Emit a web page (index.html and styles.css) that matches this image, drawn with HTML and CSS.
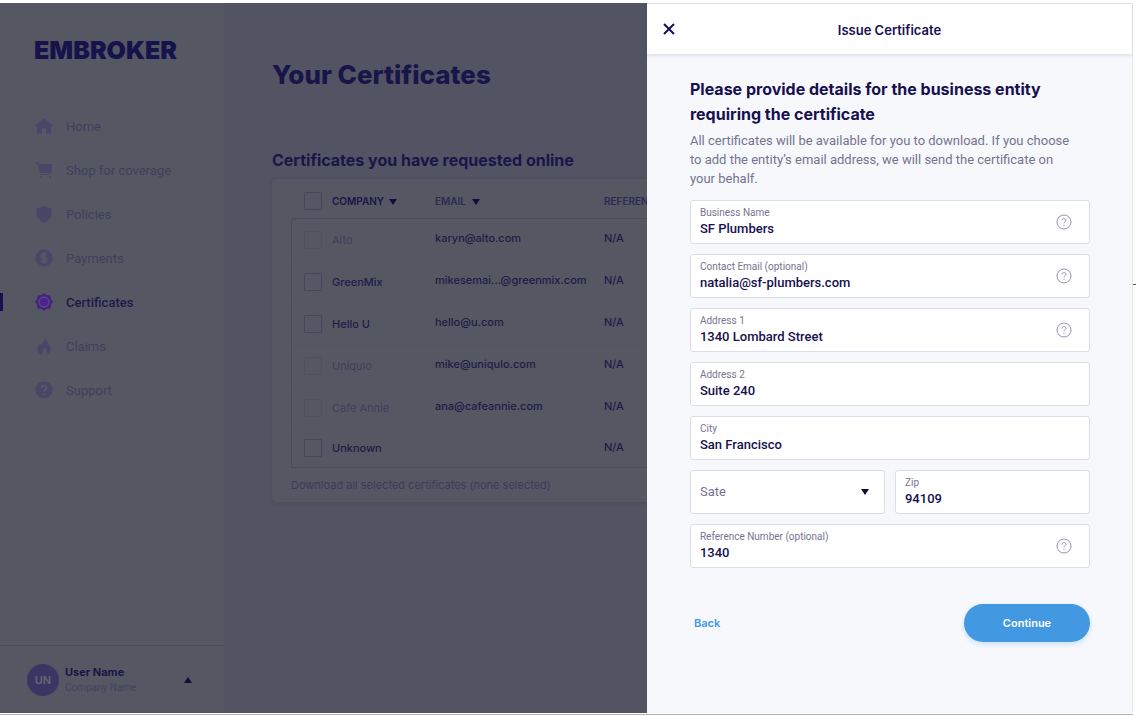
FILE: index.html
```html
<!DOCTYPE html>
<html lang="en">
<head>
  <meta charset="UTF-8">
  <title>Your Certificates</title>
  <meta name="viewport" content="width=device-width,initial-scale=1">
  <link rel="stylesheet" href="styles.css">
</head>
<body>
  <div class="app">
    <!-- Sidebar -->
    <aside class="sidebar">
      <a class="logo" href="#">EMBROKER</a>
      <nav class="nav">
        <a class="nav-item" href="#">
          <svg class="nav-icon" viewBox="0 0 18 18"><path d="M9 1 L18 9 H16 V16.5 H11 V11.5 H7 V16.5 H2 V9 H0 Z"/></svg>
          Home
        </a>
        <a class="nav-item" href="#">
          <svg class="nav-icon" viewBox="0 0 18 18"><path d="M0 1 H3 L4 3 H17 V12 H5 L2.4 2.6 H0 Z"/><path d="M5 13 H16 V14 H5 Z"/><circle cx="6" cy="16" r="1"/><circle cx="15" cy="16" r="1"/></svg>
          Shop for coverage
        </a>
        <a class="nav-item" href="#">
          <svg class="nav-icon" viewBox="0 0 18 18"><path d="M9 .5 C11.5 2.4 14 3 16.5 3 V8.5 C16.5 13 13 16 9 17.7 C5 16 1.5 13 1.5 8.5 V3 C4 3 6.5 2.4 9 .5 Z"/></svg>
          Policies
        </a>
        <a class="nav-item" href="#">
          <svg class="nav-icon" viewBox="0 0 18 18"><circle cx="9" cy="9" r="8.5"/><path class="cut" d="M11.8 6.3 C11.2 5.2 10.2 4.9 9 4.9 C7.4 4.9 6.3 5.7 6.3 6.9 C6.3 9.6 11.8 8.2 11.8 11 C11.8 12.3 10.6 13.1 9 13.1 C7.6 13.1 6.5 12.6 6 11.5 M9 3.3 V14.7"/></svg>
          Payments
        </a>
        <a class="nav-item active" href="#">
          <svg class="nav-icon" viewBox="0 0 18 18"><path d="M9 0 L11.4 2 L15.4 2.6 L16 6.6 L18 9 L16 11.4 L15.4 15.4 L11.4 16 L9 18 L6.6 16 L2.6 15.4 L2 11.4 L0 9 L2 6.6 L2.6 2.6 L6.6 2 Z"/><circle class="ring" cx="9" cy="9" r="5"/></svg>
          Certificates
        </a>
        <a class="nav-item" href="#">
          <svg class="nav-icon" viewBox="0 0 18 18"><path d="M10 0 C10.5 4 15.5 7 15.5 12 C15.5 15 13.5 17 11.5 17.8 C12.5 15 11.5 12.5 9.5 10.5 C9 12.5 6.5 14 7.5 17.8 C4.5 17 2.5 15 2.5 12 C2.5 9 4 8 4.8 6.5 C5.5 7.5 5.6 8.3 5.7 9 C8 7 9.5 4 10 0 Z"/></svg>
          Claims
        </a>
        <a class="nav-item" href="#">
          <svg class="nav-icon" viewBox="0 0 18 18"><circle cx="9" cy="9" r="8.5"/><path class="cut" d="M6.5 7 C6.5 5.4 7.6 4.5 9 4.5 C10.5 4.5 11.6 5.4 11.6 6.8 C11.6 8.6 9 8.7 9 10.6 M9 12.4 V13.9"/></svg>
          Support
        </a>
      </nav>
      <button class="user" type="button">
        <span class="avatar">UN</span>
        <span class="user-info">
          <span class="user-name">User Name</span>
          <span class="user-company">Company Name</span>
        </span>
        <svg class="caret" viewBox="0 0 8 6"><path d="M4 0 L8 6 H0 Z"/></svg>
      </button>
    </aside>

    <!-- Certificates list -->
    <main class="main">
      <h1>Your Certificates</h1>
      <h2>Certificates you have requested online</h2>
      <div class="card">
        <table class="certs">
          <thead>
            <tr>
              <th class="col-check"><input type="checkbox" aria-label="Select all"></th>
              <th class="col-company sorted">COMPANY <svg class="caret" viewBox="0 0 8 6"><path d="M0 0 H8 L4 6 Z"/></svg></th>
              <th class="col-email">EMAIL <svg class="caret" viewBox="0 0 8 6"><path d="M0 0 H8 L4 6 Z"/></svg></th>
              <th>REFERENCE</th>
            </tr>
          </thead>
          <tbody>
            <tr class="off">
              <td><input type="checkbox" aria-label="Alto" disabled></td>
              <td class="company">Alto</td><td>karyn@alto.com</td><td>N/A</td>
            </tr>
            <tr>
              <td><input type="checkbox" aria-label="GreenMix"></td>
              <td class="company">GreenMix</td><td>mikesemai...@greenmix.com</td><td>N/A</td>
            </tr>
            <tr>
              <td><input type="checkbox" aria-label="Hello U"></td>
              <td class="company">Hello U</td><td>hello@u.com</td><td>N/A</td>
            </tr>
            <tr class="off">
              <td><input type="checkbox" aria-label="Uniqulo" disabled></td>
              <td class="company">Uniqulo</td><td>mike@uniqulo.com</td><td>N/A</td>
            </tr>
            <tr class="off">
              <td><input type="checkbox" aria-label="Cafe Annie" disabled></td>
              <td class="company">Cafe Annie</td><td>ana@cafeannie.com</td><td>N/A</td>
            </tr>
            <tr>
              <td><input type="checkbox" aria-label="Unknown"></td>
              <td class="company">Unknown</td><td></td><td>N/A</td>
            </tr>
          </tbody>
        </table>
        <p class="download">Download all selected certificates (none selected)</p>
      </div>
    </main>

    <!-- Issue certificate drawer -->
    <section class="drawer" aria-labelledby="drawer-title">
      <header class="drawer-header">
        <button class="close" type="button" aria-label="Close">
          <svg viewBox="0 0 12 12"><path d="M1 1 L11 11 M11 1 L1 11"/></svg>
        </button>
        <h2 id="drawer-title">Issue Certificate</h2>
      </header>
      <form class="drawer-body">
        <h3>Please provide details for the business entity requiring the certificate</h3>
        <p class="intro">All certificates will be available for you to download. If you choose to add the entity’s email address, we will send the certificate on your behalf.</p>

        <div class="fields">
          <div class="field">
            <div class="field-text">
              <label for="business">Business Name</label>
              <input id="business" type="text" value="SF Plumbers">
            </div>
            <button class="help" type="button" aria-label="Help"><svg viewBox="0 0 16 16"><circle cx="8" cy="8" r="7"/><path d="M6 6.5 C6 5.2 6.9 4.5 8 4.5 C9.2 4.5 10 5.2 10 6.3 C10 7.7 8 7.8 8 9.3 M8 10.7 V11.9"/></svg></button>
          </div>
          <div class="field">
            <div class="field-text">
              <label for="email">Contact Email (optional)</label>
              <input id="email" type="email" value="natalia@sf-plumbers.com">
            </div>
            <button class="help" type="button" aria-label="Help"><svg viewBox="0 0 16 16"><circle cx="8" cy="8" r="7"/><path d="M6 6.5 C6 5.2 6.9 4.5 8 4.5 C9.2 4.5 10 5.2 10 6.3 C10 7.7 8 7.8 8 9.3 M8 10.7 V11.9"/></svg></button>
          </div>
          <div class="field">
            <div class="field-text">
              <label for="address1">Address 1</label>
              <input id="address1" type="text" value="1340 Lombard Street">
            </div>
            <button class="help" type="button" aria-label="Help"><svg viewBox="0 0 16 16"><circle cx="8" cy="8" r="7"/><path d="M6 6.5 C6 5.2 6.9 4.5 8 4.5 C9.2 4.5 10 5.2 10 6.3 C10 7.7 8 7.8 8 9.3 M8 10.7 V11.9"/></svg></button>
          </div>
          <div class="field">
            <div class="field-text">
              <label for="address2">Address 2</label>
              <input id="address2" type="text" value="Suite 240">
            </div>
          </div>
          <div class="field">
            <div class="field-text">
              <label for="city">City</label>
              <input id="city" type="text" value="San Francisco">
            </div>
          </div>
          <div class="field-row">
            <div class="field">
              <select id="state" aria-label="Sate">
                <option>Sate</option>
              </select>
              <svg class="caret" viewBox="0 0 8 6"><path d="M0 0 H8 L4 6 Z"/></svg>
            </div>
            <div class="field">
              <div class="field-text">
                <label for="zip">Zip</label>
                <input id="zip" type="text" value="94109">
              </div>
            </div>
          </div>
          <div class="field">
            <div class="field-text">
              <label for="reference">Reference Number (optional)</label>
              <input id="reference" type="text" value="1340">
            </div>
            <button class="help" type="button" aria-label="Help"><svg viewBox="0 0 16 16"><circle cx="8" cy="8" r="7"/><path d="M6 6.5 C6 5.2 6.9 4.5 8 4.5 C9.2 4.5 10 5.2 10 6.3 C10 7.7 8 7.8 8 9.3 M8 10.7 V11.9"/></svg></button>
          </div>
        </div>

        <div class="actions">
          <button class="back" type="button">Back</button>
          <button class="continue" type="submit">Continue</button>
        </div>
      </form>
    </section>
  </div>
</body>
</html>
```
FILE: styles.css
```css
:root {
  --navy: #17104f;
  --dim-bg: #525463;
  --dim-panel: #555763;
  --dim-line: #4a4b61;
  --dim-text: #3f3f5e;
  --dim-muted: #434360;
  --dim-navy: #181548;
  --text-muted: #77738f;
  --line: #dcdde9;
  --blue: #4299e1;
  --body-font: Roboto, "Liberation Sans", sans-serif;
}
* { box-sizing: border-box; margin: 0; padding: 0; }
body {
  font-family: Inter, "Liberation Sans", sans-serif;
  font-size: 13px; color: var(--navy); background: #fff;
  min-height: 100vh; padding: 3px 3px 2px 0;
  display: flex;
}
a { color: inherit; text-decoration: none; }
button { font: inherit; color: inherit; background: none; border: none; cursor: pointer; }

.app {
  position: relative; flex: 1; min-width: 0;
  display: flex; overflow: hidden;
  background: var(--dim-bg);
  border-bottom: 1px solid #fff;
  box-shadow: 0 1px 0 #b4b4b8;
}
body::after {
  content: ""; position: absolute; right: 0; top: 284px;
  width: 3px; height: 1px; background: #555;
}

/* Sidebar */
.sidebar {
  flex: 0 0 224px; display: flex; flex-direction: column;
  background: var(--dim-panel);
}
.logo {
  font-weight: 900; font-size: 25px; line-height: 32px;
  color: #15124c; padding: 31px 0 0 34px;
}
.nav { margin-top: 38px; font-family: var(--body-font); }
.nav-item {
  display: flex; align-items: center; gap: 13px;
  height: 44px; padding-left: 35px; color: var(--dim-text);
}
.nav-icon { width: 18px; height: 18px; fill: #484768; }
.nav-icon .cut { fill: none; stroke: var(--dim-panel); stroke-width: 2; }
.nav-item.active {
  color: #1d1a4a; font-weight: 500;
  background: linear-gradient(#17104f, #17104f) 0 center / 3px 18px no-repeat;
}
.active .nav-icon { fill: #45237f; }
.active .ring { fill: #4a2488; stroke: #655790; stroke-width: 1; }
.user {
  margin-top: auto; height: 68px; padding: 0 32px 0 27px;
  display: flex; align-items: center; gap: 6px; text-align: left;
  border-top: 1px solid #494a60;
}
.avatar {
  width: 32px; height: 32px; border-radius: 50%;
  background: #3b3564; color: #666577;
  font-size: 11px; font-weight: 600; line-height: 32px; text-align: center;
}
.user-info { flex: 1; display: flex; flex-direction: column; line-height: 16px; }
.user-name { font-size: 11px; font-weight: 700; color: var(--dim-navy); }
.user-company { font-family: var(--body-font); font-size: 10px; color: var(--dim-muted); }
.caret { width: 8px; height: 6px; fill: #100c3c; }

/* Certificates list */
.main { flex: 1; min-width: 0; padding: 54px 0 0 48px; color: var(--dim-navy); }
.main h1 { font-size: 26px; line-height: 36px; font-weight: 800; }
.main h2 { font-size: 16px; line-height: 24px; font-weight: 700; margin-top: 55px; }
.card {
  margin-top: 7px; padding: 5px 18px 0 19px;
  height: 323px;
  background: var(--dim-panel); border-radius: 4px;
  box-shadow: 0 1px 4px rgba(30, 30, 70, 0.15);
}
.certs {
  width: 100%; table-layout: fixed;
  border-collapse: separate; border-spacing: 0;
  font-size: 11px; font-weight: 500; color: #1e1c46;
}
.certs th { height: 34px; font-size: 10px; font-weight: 600; text-align: left; color: #2b2a50; }
.certs th.sorted { color: var(--dim-navy); }
.certs th .caret { margin-left: 3px; }
.col-check { width: 41px; }
.col-company { width: 103px; }
.col-email { width: 169px; }
.certs th.col-check, .certs td:first-child { padding-left: 13px; }
.certs td { height: 42px; border-top: 1px solid #535564; padding-bottom: 3px; }
.certs td.company, .certs td:first-child { padding-bottom: 0; }
.certs td:first-child { border-left: 1px solid var(--dim-line); padding-left: 12px; }
.certs tbody tr:first-child td { border-top-color: var(--dim-line); }
.certs tbody tr:first-child td:first-child { border-top-left-radius: 4px; }
.certs tbody tr:last-child td { height: 40px; border-bottom: 1px solid var(--dim-line); }
.certs input {
  appearance: none; display: block; width: 18px; height: 18px;
  border: 1px solid #46465f; border-radius: 1px;
}
.certs input:disabled { border-color: #4f5062; }
.off .company { color: #3f3f5c; font-weight: 400; }
.download { font-size: 11px; line-height: 16px; margin-top: 9px; color: #3c3b5c; }

/* Issue certificate drawer */
.drawer {
  position: absolute; top: 0; right: 0; bottom: 0; width: 42.9%;
  display: flex; flex-direction: column; background: #f6f8fc;
  border: 1px solid #e6e7ec; border-width: 1px 1px 0 0;
}
.drawer-header {
  display: flex; align-items: center; height: 50px; padding: 0 16px;
  background: #fff; box-shadow: 0 1px 4px rgba(40, 40, 80, 0.16);
}
.drawer-header h2 { flex: 1; font-size: 13px; font-weight: 600; line-height: 18px; text-align: center; padding: 2px 12px 0 0; }
.close { width: 12px; height: 12px; }
.close svg { display: block; fill: none; stroke: var(--navy); stroke-width: 2; }
.drawer-body { padding: 23px 42px 24px 43px; }
.drawer-body h3 { font-size: 16px; line-height: 25px; font-weight: 700; }
.intro { font-family: var(--body-font); line-height: 19px; margin-top: 4px; padding-right: 14px; color: var(--text-muted); }
.fields { display: flex; flex-direction: column; gap: 10px; margin-top: 12px; }
.field-row { display: grid; grid-template-columns: 1fr 1fr; gap: 10px; }
.field {
  display: flex; align-items: center; height: 44px; padding: 0 17px 0 9px;
  font-family: var(--body-font);
  background: #fff; border: 1px solid var(--line); border-radius: 3px;
}
.field-text { flex: 1; min-width: 0; display: flex; flex-direction: column; }
.field label { font-size: 10px; line-height: 14px; color: var(--text-muted); }
.field input, .field select {
  width: 100%; border: none; outline: none; background: none; appearance: none;
  font: inherit; font-weight: 500; line-height: 18px; height: 18px; color: var(--navy);
}
.field select { font-weight: 400; color: var(--text-muted); }
.field .caret { flex: none; margin-right: -2px; }
.help { width: 16px; height: 16px; }
.help svg { display: block; fill: none; stroke: #9592a8; stroke-width: 1; }
.actions { display: flex; justify-content: space-between; align-items: center; margin-top: 36px; }
.back, .continue { font-size: 11px; font-weight: 600; }
.back { color: var(--blue); padding: 8px 4px; }
.continue {
  width: 126px; height: 38px; border-radius: 19px;
  background: var(--blue); color: #fff;
  box-shadow: 0 2px 5px rgba(66, 153, 225, 0.25);
}
```
